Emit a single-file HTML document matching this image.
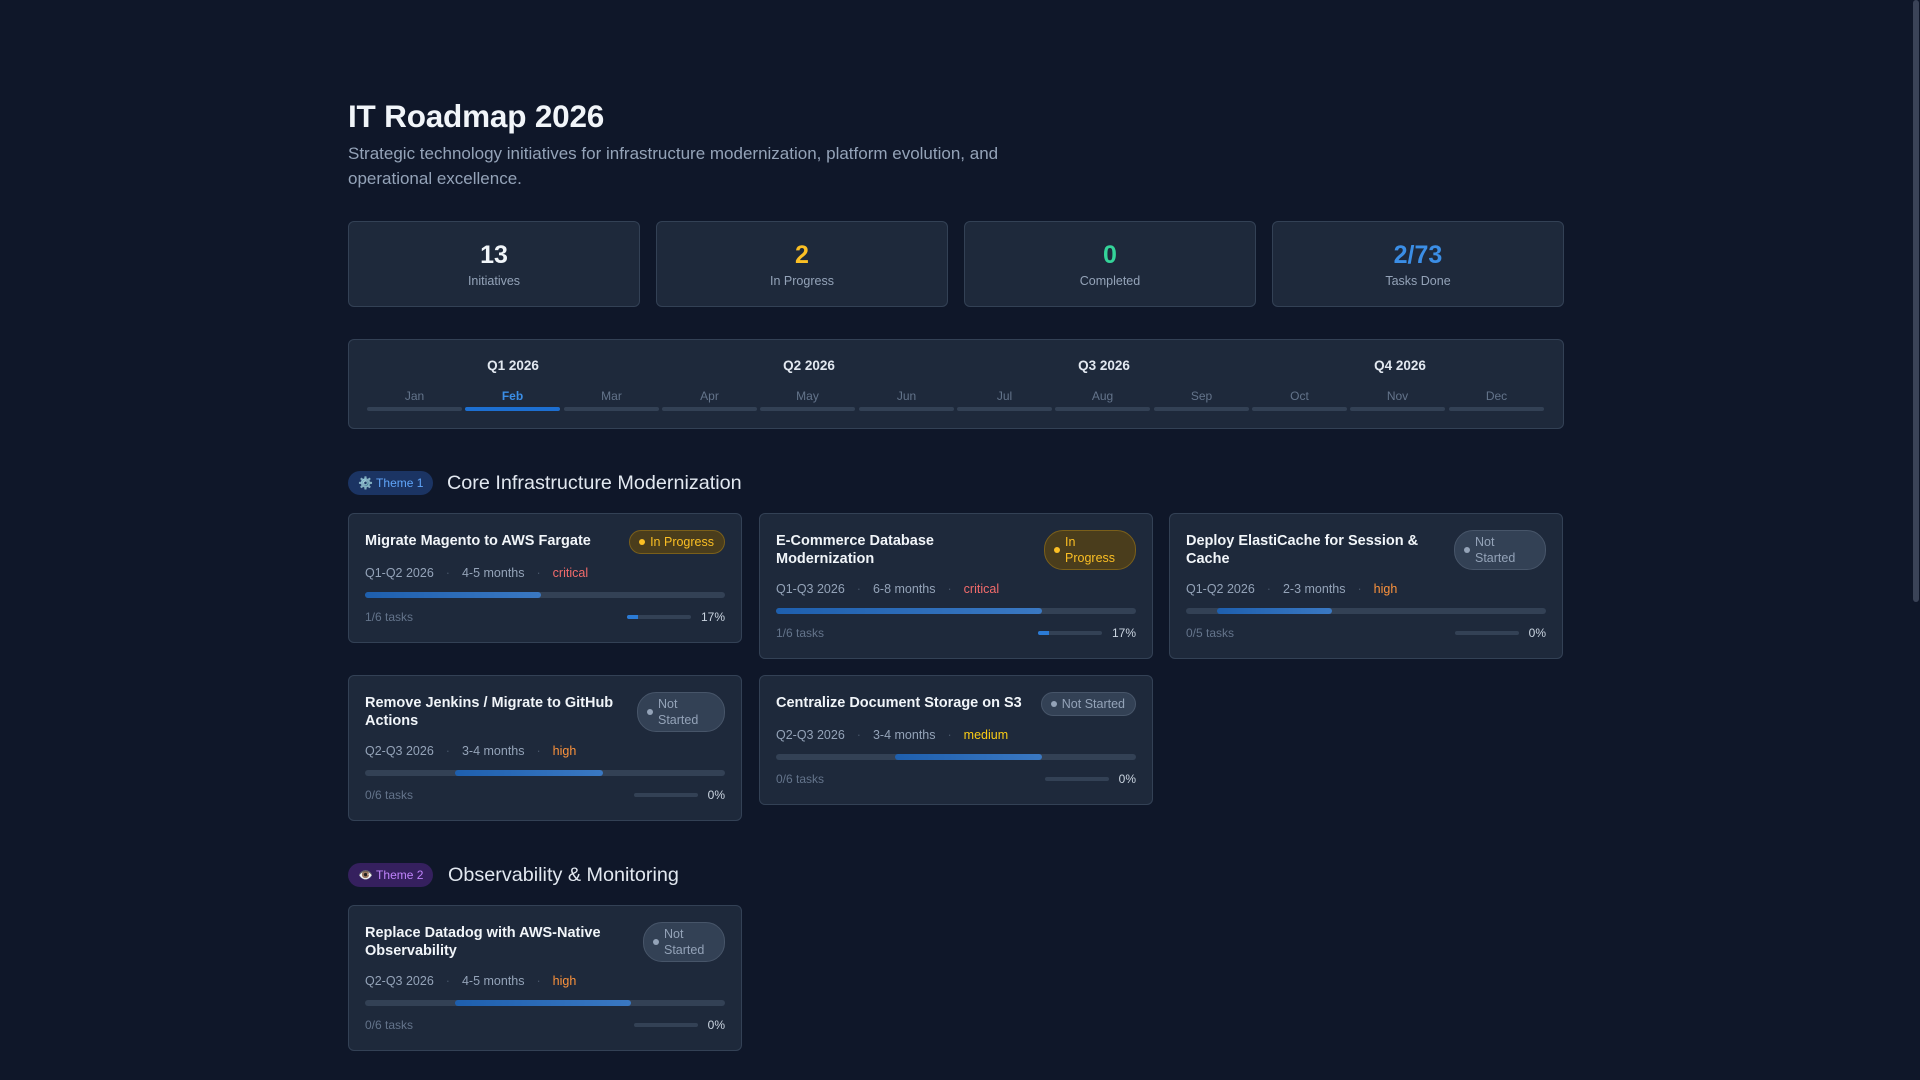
<!DOCTYPE html>
<html><head><meta charset="utf-8"><style>
*{box-sizing:border-box;margin:0;padding:0}
body{width:1920px;height:1080px;background:#0f1729;font-family:"Liberation Sans",sans-serif;position:relative;overflow:hidden;color:#e2e8f0}
.abs{position:absolute}
h1{position:absolute;left:348px;top:98px;font-size:31.5px;font-weight:700;color:#f1f5f9;letter-spacing:-0.2px}
.sub{position:absolute;left:348px;top:141px;width:700px;font-size:17px;line-height:25px;color:#94a3b8}
.stat{position:absolute;top:221px;width:292px;height:86px;background:#1e293b;border:1px solid #334155;border-radius:6px;text-align:center}
.stat b{display:block;margin-top:18px;font-size:25px;line-height:30px}
.stat span{display:block;margin-top:4px;font-size:12.5px;color:#94a3b8}
.tl{position:absolute;left:348px;top:339px;width:1216px;height:90px;background:#1e293b;border:1px solid #334155;border-radius:6px}
.q{position:absolute;top:18px;font-size:13.5px;font-weight:700;color:#e2e8f0;width:200px;text-align:center}
.m{position:absolute;top:49px;width:95px;text-align:center;font-size:12px;color:#64748b}
.mb{position:absolute;top:67px;width:95px;height:4px;border-radius:2px;background:#334155}
.badge{position:absolute;height:24px;border-radius:12px;font-size:12px;line-height:24px;padding:0 10px}
.th{position:absolute;font-size:19.8px;color:#e2e8f0}
.card{position:absolute;width:394px;background:#1e293b;border:1px solid #334155;border-radius:6px;padding:16px 16px 0 16px}
.top{display:flex;justify-content:space-between;align-items:flex-start}
.title{font-size:14.5px;font-weight:700;color:#f1f5f9;line-height:18px;padding-top:2px}
.pill{flex:none;border-radius:19px;font-size:12.5px;line-height:16px;padding:3px 10px 3px 20px;position:relative;margin-left:10px}
.pill:before{content:"";position:absolute;left:9px;top:50%;margin-top:-3px;width:6px;height:6px;border-radius:3px;background:currentColor}
.ip{background:#4a3d1c;border:1px solid #7a5f1a;color:#fbbf24}
.ns{background:#334155;border:1px solid #475569;color:#94a3b8}
.ns:before{background:#94a3b8}
.meta{margin-top:12px;font-size:12.5px;color:#94a3b8;height:16px}
.meta i{font-style:normal;color:#475569;margin:0 12px}
.bar{margin-top:10px;height:6px;border-radius:3px;background:#334155;position:relative}
.bar div{position:absolute;top:0;height:6px;border-radius:3px;background:linear-gradient(90deg,#1e5fae,#3a78c2)}
.foot{display:flex;justify-content:space-between;align-items:center;margin-top:11px;height:16px;font-size:12px;color:#64748b}
.mini{display:flex;align-items:center;color:#cbd5e1}
.mini span{width:64px;height:4px;border-radius:2px;background:#334155;margin-right:10px;position:relative;overflow:hidden}
.mini span b{position:absolute;left:0;top:0;height:4px;background:#2b7bd6}
.crit{color:#f26b6b}.high{color:#fb923c}.med{color:#facc15}
</style></head><body>
<h1>IT Roadmap 2026</h1>
<div class="sub">Strategic technology initiatives for infrastructure modernization, platform evolution, and operational excellence.</div>
<div class="stat" style="left:348px"><b style="color:#f1f5f9">13</b><span>Initiatives</span></div>
<div class="stat" style="left:656px"><b style="color:#fbbf24">2</b><span>In Progress</span></div>
<div class="stat" style="left:964px"><b style="color:#34d399">0</b><span>Completed</span></div>
<div class="stat" style="left:1272px"><b style="color:#3b8ee6">2/73</b><span>Tasks Done</span></div>
<div class="tl">
<div class="q" style="left:64px">Q1 2026</div><div class="q" style="left:360px">Q2 2026</div><div class="q" style="left:655px">Q3 2026</div><div class="q" style="left:951px">Q4 2026</div>
<div class="m" style="left:18px">Jan</div><div class="m" style="left:116px;color:#3b8ee6;font-weight:700">Feb</div><div class="m" style="left:215px">Mar</div><div class="m" style="left:313px">Apr</div><div class="m" style="left:411px">May</div><div class="m" style="left:510px">Jun</div><div class="m" style="left:608px">Jul</div><div class="m" style="left:706px">Aug</div><div class="m" style="left:805px">Sep</div><div class="m" style="left:903px">Oct</div><div class="m" style="left:1001px">Nov</div><div class="m" style="left:1100px">Dec</div>
<div class="mb" style="left:18px"></div><div class="mb" style="left:116px;background:#1d6fd1"></div><div class="mb" style="left:215px"></div><div class="mb" style="left:313px"></div><div class="mb" style="left:411px"></div><div class="mb" style="left:510px"></div><div class="mb" style="left:608px"></div><div class="mb" style="left:706px"></div><div class="mb" style="left:805px"></div><div class="mb" style="left:903px"></div><div class="mb" style="left:1001px"></div><div class="mb" style="left:1100px"></div>
</div>
<div class="badge" style="left:348px;top:471px;background:#1b3463;color:#60a5fa">⚙️ Theme 1</div>
<div class="th" style="left:447px;top:472px">Core Infrastructure Modernization</div>

<div class="card" style="left:348px;top:513px;height:130px">
<div class="top"><div class="title">Migrate Magento to AWS Fargate</div><div class="pill ip">In Progress</div></div>
<div class="meta">Q1-Q2 2026<i>·</i>4-5 months<i>·</i><span class="crit">critical</span></div>
<div class="bar"><div style="left:0;width:49%"></div></div>
<div class="foot"><span>1/6 tasks</span><span class="mini"><span><b style="width:17%"></b></span>17%</span></div>
</div>
<div class="card" style="left:759px;top:513px;height:146px">
<div class="top"><div class="title">E-Commerce Database<br>Modernization</div><div class="pill ip" style="width:92px">In<br>Progress</div></div>
<div class="meta">Q1-Q3 2026<i>·</i>6-8 months<i>·</i><span class="crit">critical</span></div>
<div class="bar"><div style="left:0;width:74%"></div></div>
<div class="foot"><span>1/6 tasks</span><span class="mini"><span><b style="width:17%"></b></span>17%</span></div>
</div>
<div class="card" style="left:1169px;top:513px;height:146px">
<div class="top"><div class="title">Deploy ElastiCache for Session &amp;<br>Cache</div><div class="pill ns" style="width:92px">Not<br>Started</div></div>
<div class="meta">Q1-Q2 2026<i>·</i>2-3 months<i>·</i><span class="high">high</span></div>
<div class="bar"><div style="left:8.5%;width:32%"></div></div>
<div class="foot"><span>0/5 tasks</span><span class="mini"><span></span>0%</span></div>
</div>
<div class="card" style="left:348px;top:675px;height:146px">
<div class="top"><div class="title">Remove Jenkins / Migrate to GitHub<br>Actions</div><div class="pill ns" style="width:88px">Not<br>Started</div></div>
<div class="meta">Q2-Q3 2026<i>·</i>3-4 months<i>·</i><span class="high">high</span></div>
<div class="bar"><div style="left:25%;width:41%"></div></div>
<div class="foot"><span>0/6 tasks</span><span class="mini"><span></span>0%</span></div>
</div>
<div class="card" style="left:759px;top:675px;height:130px">
<div class="top"><div class="title">Centralize Document Storage on S3</div><div class="pill ns">Not Started</div></div>
<div class="meta">Q2-Q3 2026<i>·</i>3-4 months<i>·</i><span class="med">medium</span></div>
<div class="bar"><div style="left:33%;width:41%"></div></div>
<div class="foot"><span>0/6 tasks</span><span class="mini"><span></span>0%</span></div>
</div>

<div class="badge" style="left:348px;top:863px;background:#35205e;color:#c084fc">👁️ Theme 2</div>
<div class="th" style="left:448px;top:864px">Observability &amp; Monitoring</div>
<div class="card" style="left:348px;top:905px;height:146px">
<div class="top"><div class="title">Replace Datadog with AWS-Native<br>Observability</div><div class="pill ns" style="width:82px">Not<br>Started</div></div>
<div class="meta">Q2-Q3 2026<i>·</i>4-5 months<i>·</i><span class="high">high</span></div>
<div class="bar"><div style="left:25%;width:49%"></div></div>
<div class="foot"><span>0/6 tasks</span><span class="mini"><span></span>0%</span></div>
</div>
<div class="abs" style="left:1912px;top:0;width:8px;height:1080px;background:#0f1729"></div>
<div class="abs" style="left:1913px;top:0;width:6px;height:602px;border-radius:3px;background:#3a4357"></div>
</body></html>
